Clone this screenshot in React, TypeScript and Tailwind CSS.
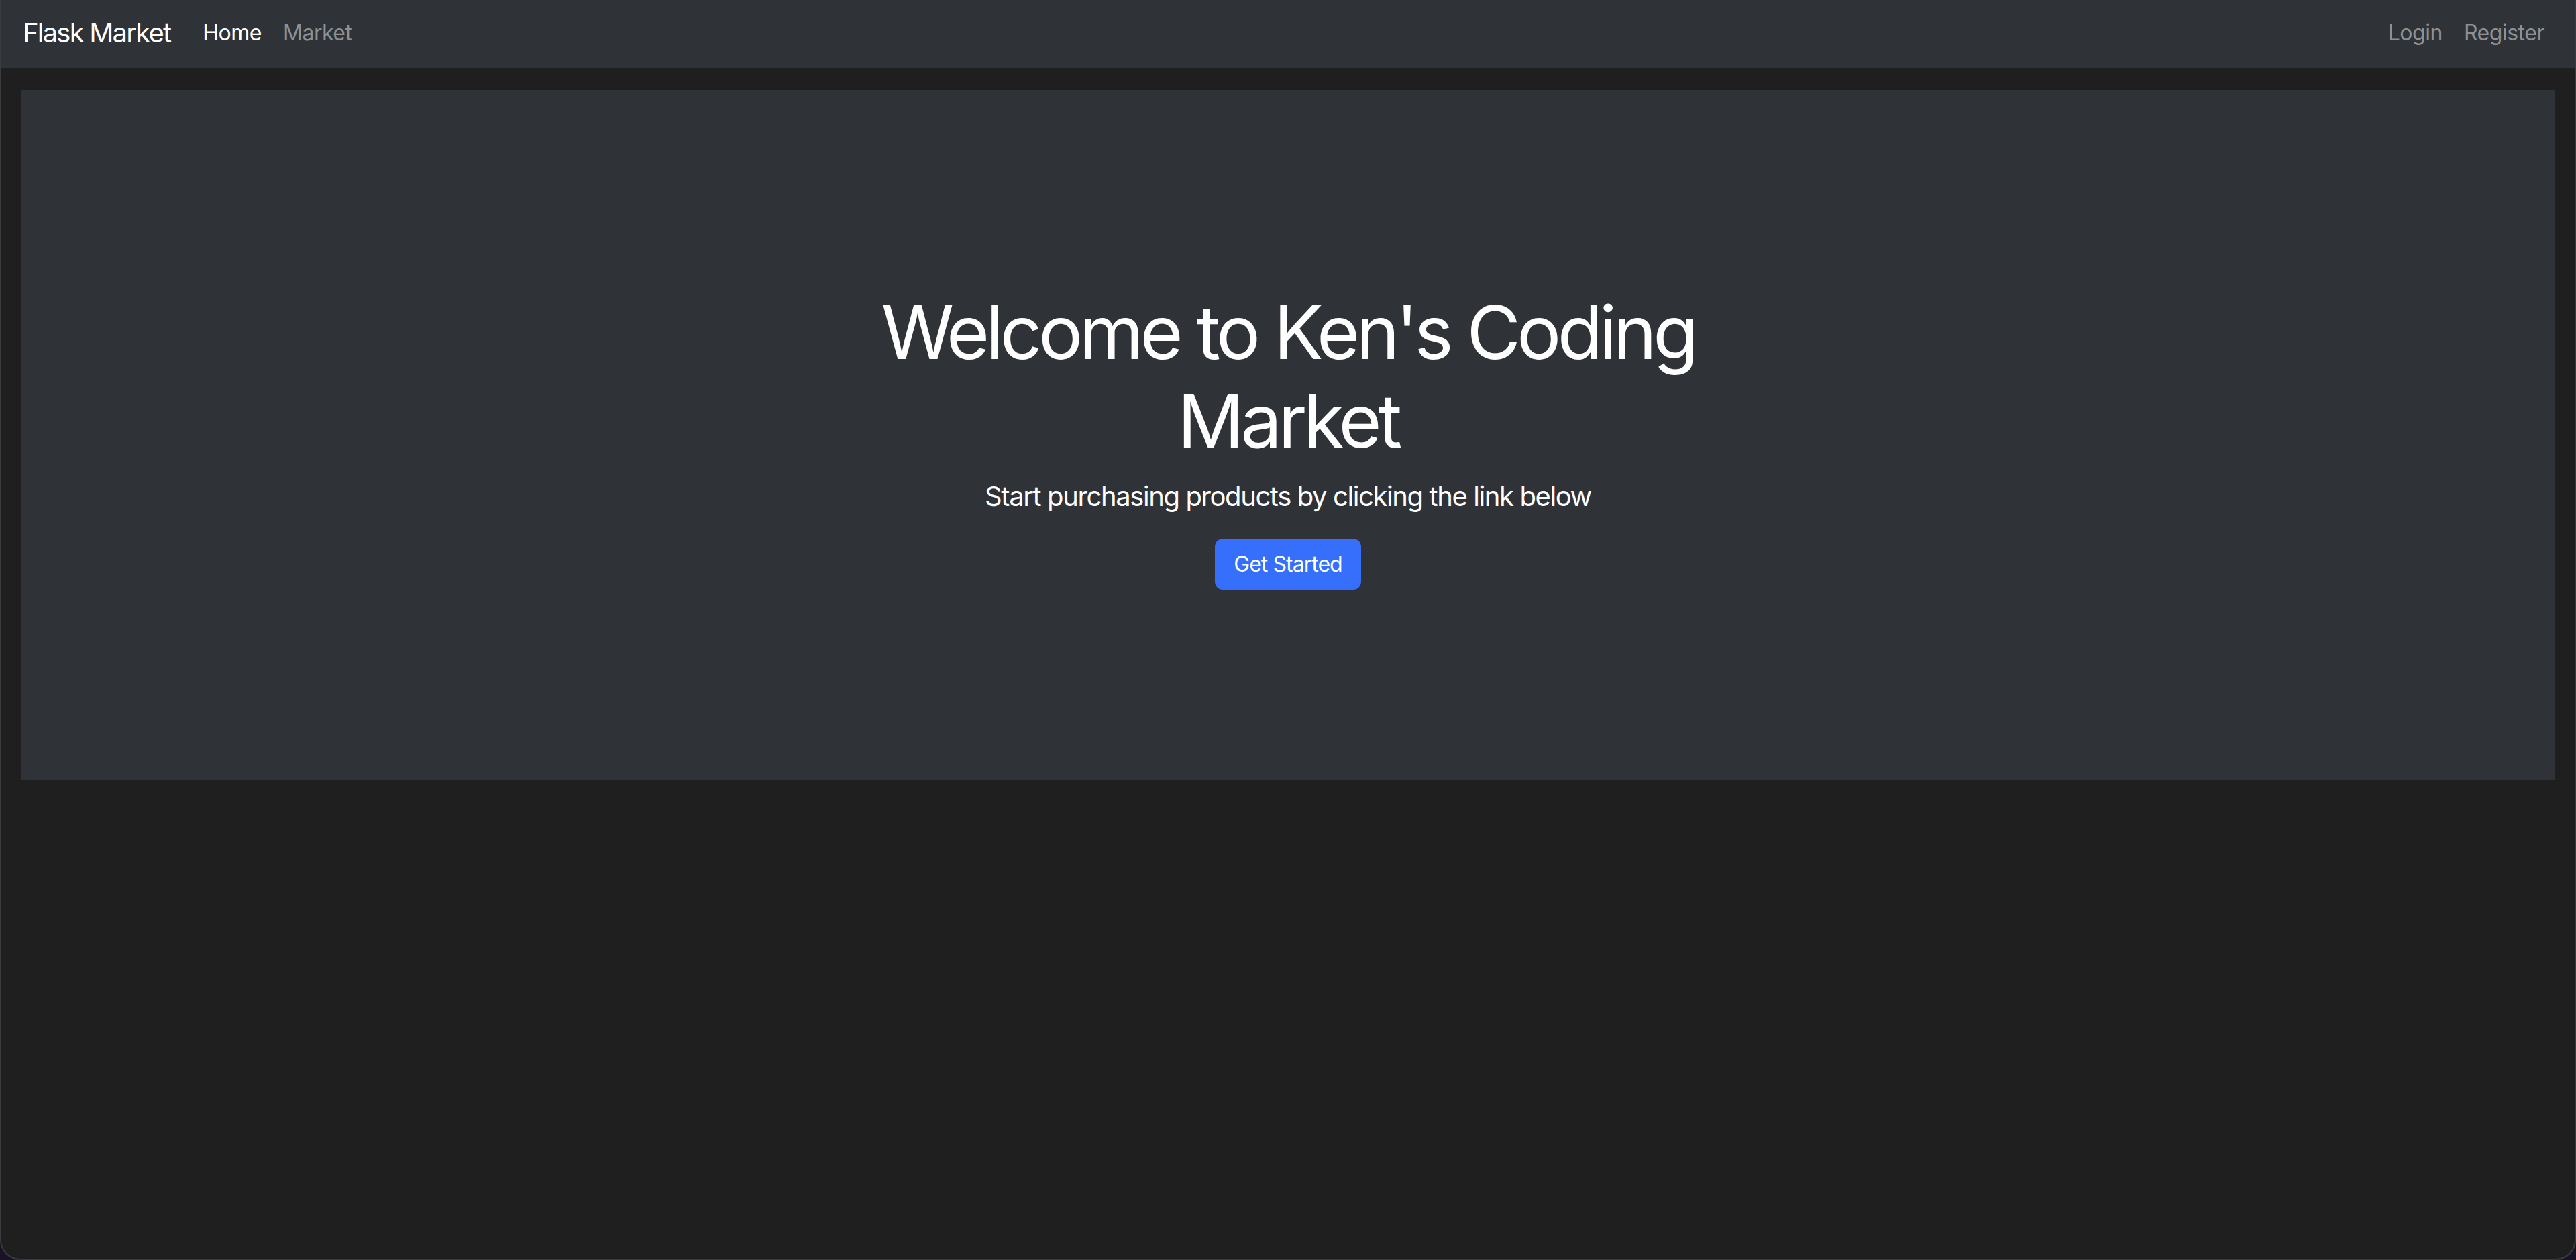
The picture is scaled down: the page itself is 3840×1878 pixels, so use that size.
import React from "react";

export default function App() {
  const font = { fontFamily: "Inter, 'Liberation Sans', sans-serif" };
  return (
    <div className="min-h-[1878px] bg-[#1a1326]" style={font}>
      <div className="flex min-h-[1878px] flex-col overflow-hidden rounded-b-[30px] border-x-2 border-b-2 border-[#3a3b3d] bg-[#1f1f1f]">
        <nav className="flex h-[102px] items-center bg-[#2f3237] pb-[4px] pl-[32px] pr-[29px]">
          <a className="mr-[32px] text-[40px] leading-[60px] text-white tracking-[-0.045em]">Flask Market</a>
          <div className="flex items-center">
            <a className="px-[16px] text-[32px] leading-[48px] text-white tracking-[-0.015em]">Home</a>
            <a className="px-[16px] text-[32px] leading-[48px] text-[#8e9094] tracking-[-0.015em]">Market</a>
          </div>
          <div className="ml-auto flex items-center">
            <a className="px-[16px] text-[32px] leading-[48px] text-[#8e9094] tracking-[-0.015em]">Login</a>
            <a className="px-[16px] text-[32px] leading-[48px] text-[#8e9094] tracking-[-0.015em]">Register</a>
          </div>
        </nav>
        <main className="px-[30px] pt-[32px]">
          <section className="flex h-[1029px] flex-col items-center justify-center bg-[#2f3237] pt-[10px] text-center text-white">
            <h1 className="max-w-[1450px] text-[110px] font-normal leading-[132px] tracking-[-0.05em]">
              Welcome to Ken's Coding Market
            </h1>
            <p className="mt-[17px] text-[40px] leading-[60px] tracking-[-0.035em]">
              Start purchasing products by clicking the link below
            </p>
            <button className="mt-[33px] h-[76px] rounded-[12px] bg-[#356ffc] px-[28px] text-[32px] leading-[48px] text-white tracking-[-0.03em]">
              Get Started
            </button>
          </section>
        </main>
      </div>
    </div>
  );
}
